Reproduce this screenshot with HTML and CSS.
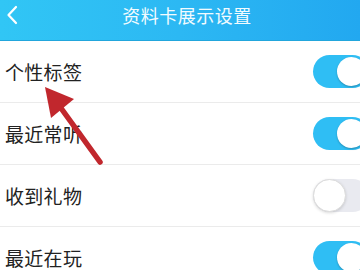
FILE: index.html
```html
<!DOCTYPE html>
<html>
<head>
<meta charset="utf-8">
<link rel="stylesheet" href="styles.css">
</head>
<body>
<div class="page">
  <header class="bar">
    <svg class="back" width="12" height="20" viewBox="0 0 12 20"><path d="M10 2 L2.5 10 L10 18" fill="none" stroke="#fff" stroke-width="2.2" stroke-linecap="round" stroke-linejoin="round"/></svg>
    <div class="title">资料卡展示设置</div>
  </header>
  <div class="list">
    <div class="row"><span class="label">个性标签</span><span class="switch on"><span class="knob"></span></span></div>
    <div class="row"><span class="label">最近常听</span><span class="switch on"><span class="knob"></span></span></div>
    <div class="row"><span class="label">收到礼物</span><span class="switch off"><span class="knob"></span></span></div>
    <div class="row"><span class="label">最近在玩</span><span class="switch on"><span class="knob"></span></span></div>
  </div>
  <svg class="arrow" width="360" height="270" viewBox="0 0 360 270">
    <line x1="100" y1="162" x2="58" y2="104" stroke="#c1272d" stroke-width="5.5" stroke-linecap="round"/>
    <polygon points="45,87 74,99 51,118" fill="#c1272d"/>
  </svg>
</div>
</body>
</html>
```
FILE: styles.css
```css
html, body { margin: 0; padding: 0; background: #fff; }
body { font-family: "Noto Sans CJK SC", "Noto Sans", sans-serif; overflow: hidden; width: 360px; height: 270px; }
.page { position: relative; width: 360px; height: 270px; overflow: hidden; }
.bar {
  height: 40px;
  border-bottom: 1px solid #22a6dc;
  background: linear-gradient(90deg, #31c6f5 0%, #2cb8f3 50%, #22a8f0 100%);
  display: flex;
  align-items: flex-start;
  position: relative;
}
.back { position: absolute; left: 6px; top: 5px; }
.title {
  flex: 1;
  text-align: center;
  color: #f2fbff;
  font-size: 18px;
  line-height: 30px;
  padding-left: 14px;
  letter-spacing: 0.5px;
}
.list { display: flex; flex-direction: column; }
.row {
  height: 61px;
  border-bottom: 1px solid #ebebeb;
  display: flex;
  align-items: center;
  justify-content: space-between;
  padding-left: 5px;
}
.label { font-size: 19px; color: #222; letter-spacing: 0.3px; }
.switch {
  width: 56px;
  height: 33px;
  border-radius: 17px;
  margin-right: -9px;
  position: relative;
  box-sizing: border-box;
}
.switch.on { background: #2fbef4; }
.switch.off { background: #e9eaf0; }
.knob {
  position: absolute;
  top: 2px;
  width: 29px;
  height: 29px;
  border-radius: 50%;
  background: #fff;
  box-shadow: 0 1px 2px rgba(0,0,0,0.25);
}
.switch.on .knob { left: 24px; }
.switch.off .knob { left: 0; top: 0; width: 31px; height: 31px; border: 1px solid #dcdcdc; box-shadow: 0 1px 3px rgba(0,0,0,0.15); }
.arrow { position: absolute; left: 0; top: 0; pointer-events: none; }
```
